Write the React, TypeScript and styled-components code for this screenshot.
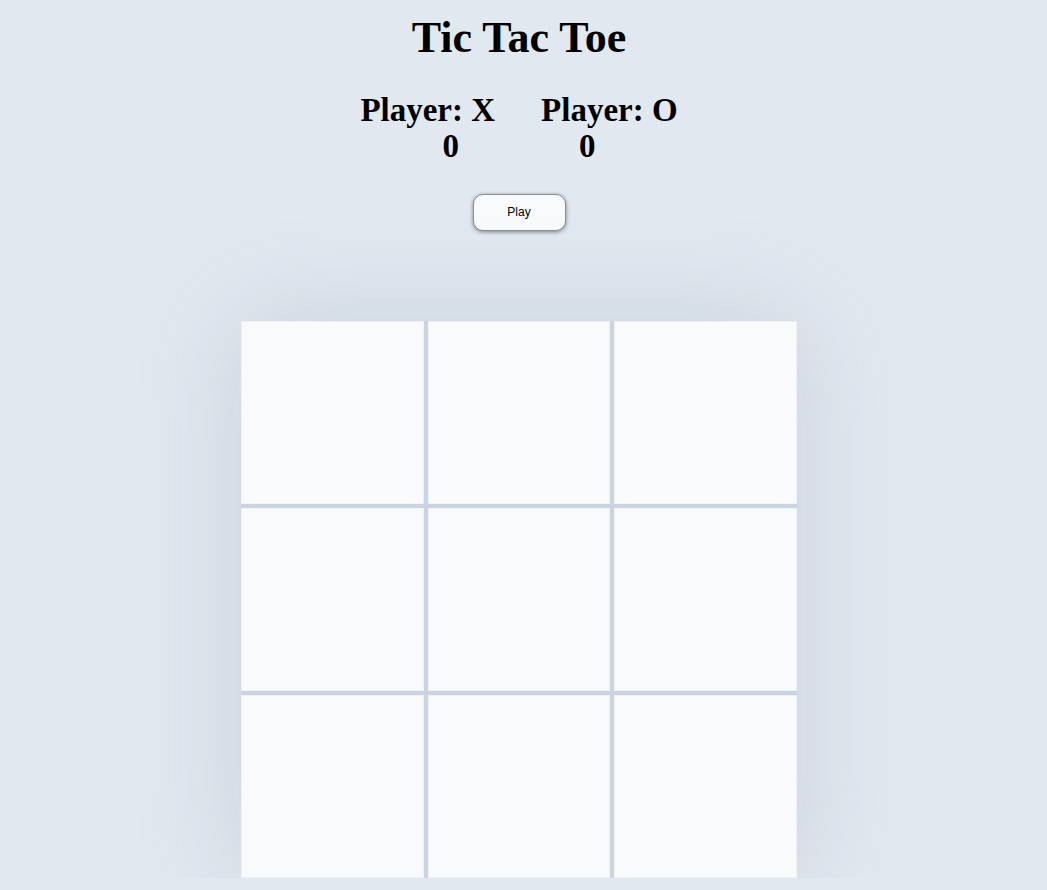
import React, { useState } from "react";
import styled, { createGlobalStyle } from "styled-components";

const GlobalStyle = createGlobalStyle`
  body {
    margin: 0;
    background-color: #e2e8f0;
    font-family: "Liberation Serif", "Times New Roman", serif;
    overflow: hidden;
  }
`;

const Page = styled.div`
  width: 1038px;
  display: flex;
  flex-direction: column;
  align-items: center;
`;

const Title = styled.h1`
  font-size: 44px;
  font-weight: 700;
  margin: 13px 0 0;
  line-height: 1.15;
  color: #000;
`;

const Row = styled.div<{ $gap: number }>`
  display: flex;
  justify-content: center;
  gap: ${(p) => p.$gap}px;
  font-size: 33px;
  font-weight: 700;
  line-height: 36px;
`;

const Scores = styled.div`
  margin-top: 28px;
  display: flex;
  flex-direction: column;
  align-items: center;
`;

const PlayButton = styled.button`
  margin-top: 30px;
  width: 93px;
  height: 37px;
  border-radius: 10px;
  border: 1px solid #8a8f96;
  background: #f8fafc;
  box-shadow: 0 1px 4px rgba(0, 0, 0, 0.45);
  font-family: "Liberation Sans", Arial, sans-serif;
  font-size: 12px;
  color: #000;
  cursor: pointer;
`;

const Board = styled.div`
  margin-top: 90px;
  width: 556px;
  display: grid;
  grid-template-columns: repeat(3, 1fr);
  grid-auto-rows: 183px;
  gap: 4px;
  background: #cbd5e1;
  box-shadow: 0 0 100px 0 rgba(100, 116, 139, 0.2);
`;

const Cell = styled.div`
  background: #f8fafc;
  box-shadow: inset 0 0 0 1px #eef2f7;
  cursor: pointer;
  display: flex;
  align-items: center;
  justify-content: center;
  font-size: 96px;
  font-weight: 700;
`;

export default function App() {
  const [cells] = useState<string[]>(Array(9).fill(""));
  const [score] = useState({ x: 0, o: 0 });

  return (
    <Page>
      <GlobalStyle />
      <Title>Tic Tac Toe</Title>
      <Scores>
        <Row $gap={46}>
          <span>Player: X</span>
          <span>Player: O</span>
        </Row>
        <Row $gap={120}>
          <span>{score.x}</span>
          <span>{score.o}</span>
        </Row>
      </Scores>
      <PlayButton>Play</PlayButton>
      <Board>
        {cells.map((c, i) => (
          <Cell key={i}>{c}</Cell>
        ))}
      </Board>
    </Page>
  );
}
